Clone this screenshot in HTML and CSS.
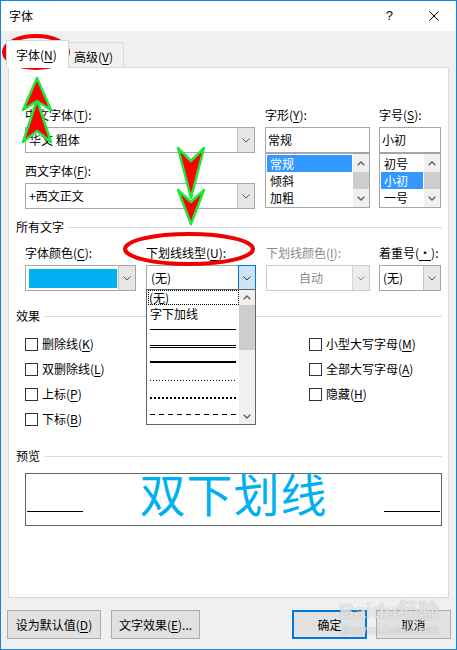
FILE: index.html
```html
<!DOCTYPE html>
<html lang="zh-CN">

<head>
    <meta charset="UTF-8">
    <title>字体</title>
    <link rel="stylesheet" href="styles.css">
</head>

<body>
    <div class="window">
        <div class="titlebar">
            <span class="title">字体</span>
            <span class="help">?</span>
            <svg class="close" width="10" height="10" viewBox="0 0 10 10">
                <path d="M0.5 0.5L9.5 9.5M9.5 0.5L0.5 9.5" stroke="#000" stroke-width="1" fill="none"/>
            </svg>
        </div>

        <div class="client">
            <div class="tabs">
                <div class="tab active">字体(<u>N</u>)</div>
                <div class="tab">高级(<u>V</u>)</div>
            </div>

            <div class="panel">
                <!-- font names / style / size -->
                <div class="font-row">
                    <div class="field col-name">
                        <label>中文字体(<u>T</u>):</label>
                        <div class="combo">
                            <span class="value">华文 粗体</span>
                            <span class="drop"><svg width="8" height="5" viewBox="0 0 8 5"><path d="M0.5 0.5L4 4L7.5 0.5" stroke="#555" fill="none"/></svg></span>
                        </div>
                        <label class="second">西文字体(<u>F</u>):</label>
                        <div class="combo">
                            <span class="value">+西文正文</span>
                            <span class="drop"><svg width="8" height="5" viewBox="0 0 8 5"><path d="M0.5 0.5L4 4L7.5 0.5" stroke="#555" fill="none"/></svg></span>
                        </div>
                    </div>

                    <div class="field col-style">
                        <label>字形(<u>Y</u>):</label>
                        <div class="editbox">常规</div>
                        <div class="listbox">
                            <div class="items">
                                <div class="item selected">常规</div>
                                <div class="item">倾斜</div>
                                <div class="item">加粗</div>
                            </div>
                            <div class="scroll">
                                <span class="arrow"><svg width="8" height="5" viewBox="0 0 8 5"><path d="M0.7 4.3L4 1L7.3 4.3" stroke="#606060" stroke-width="1.4" fill="none"/></svg></span>
                                <span class="thumb"></span>
                                <span class="arrow"><svg width="8" height="5" viewBox="0 0 8 5"><path d="M0.7 0.7L4 4L7.3 0.7" stroke="#606060" stroke-width="1.4" fill="none"/></svg></span>
                            </div>
                        </div>
                    </div>

                    <div class="field col-size">
                        <label>字号(<u>S</u>):</label>
                        <div class="editbox">小初</div>
                        <div class="listbox">
                            <div class="items">
                                <div class="item">初号</div>
                                <div class="item selected">小初</div>
                                <div class="item">一号</div>
                            </div>
                            <div class="scroll">
                                <span class="arrow"><svg width="8" height="5" viewBox="0 0 8 5"><path d="M0.7 4.3L4 1L7.3 4.3" stroke="#606060" stroke-width="1.4" fill="none"/></svg></span>
                                <span class="thumb"></span>
                                <span class="arrow"><svg width="8" height="5" viewBox="0 0 8 5"><path d="M0.7 0.7L4 4L7.3 0.7" stroke="#606060" stroke-width="1.4" fill="none"/></svg></span>
                            </div>
                        </div>
                    </div>
                </div>

                <div class="group-title first"><span>所有文字</span></div>

                <div class="attr-row">
                    <div class="field col-color">
                        <label>字体颜色(<u>C</u>):</label>
                        <div class="combo">
                            <span class="swatch"></span>
                            <span class="drop"><svg width="8" height="5" viewBox="0 0 8 5"><path d="M0.5 0.5L4 4L7.5 0.5" stroke="#555" fill="none"/></svg></span>
                        </div>
                    </div>
                    <div class="field col-uline">
                        <label>下划线线型(<u>U</u>):</label>
                        <div class="combo">
                            <span class="value">(无)</span>
                            <span class="drop hot"><svg width="8" height="5" viewBox="0 0 8 5"><path d="M0.5 0.5L4 4L7.5 0.5" stroke="#333" fill="none"/></svg></span>
                        </div>
                    </div>
                    <div class="field col-ucolor disabled">
                        <label>下划线颜色(<u>I</u>):</label>
                        <div class="combo">
                            <span class="value center">自动</span>
                            <span class="drop"><svg width="8" height="5" viewBox="0 0 8 5"><path d="M0.5 0.5L4 4L7.5 0.5" stroke="#888" fill="none"/></svg></span>
                        </div>
                    </div>
                    <div class="field col-emph">
                        <label>着重号(<u>·</u>):</label>
                        <div class="combo">
                            <span class="value">(无)</span>
                            <span class="drop"><svg width="8" height="5" viewBox="0 0 8 5"><path d="M0.5 0.5L4 4L7.5 0.5" stroke="#555" fill="none"/></svg></span>
                        </div>
                    </div>
                </div>

                <div class="group-title"><span>效果</span></div>

                <div class="effects">
                    <div class="col left">
                        <div class="check"><span class="box"></span>删除线(<u>K</u>)</div>
                        <div class="check"><span class="box"></span>双删除线(<u>L</u>)</div>
                        <div class="check"><span class="box"></span>上标(<u>P</u>)</div>
                        <div class="check"><span class="box"></span>下标(<u>B</u>)</div>
                    </div>
                    <div class="col">
                        <div class="check"><span class="box"></span>小型大写字母(<u>M</u>)</div>
                        <div class="check"><span class="box"></span>全部大写字母(<u>A</u>)</div>
                        <div class="check"><span class="box"></span>隐藏(<u>H</u>)</div>
                    </div>
                </div>

                <div class="group-title preview-title"><span>预览</span></div>

                <div class="preview">
                    <span class="rule"></span>
                    <span class="sample">双下划线</span>
                    <span class="rule"></span>
                </div>

                <!-- open underline style list -->
                <div class="droplist">
                    <div class="items">
                        <div class="item focus">(无)</div>
                        <div class="item">字下加线</div>
                        <div class="item line"><span class="single"></span></div>
                        <div class="item line"><span class="double"></span></div>
                        <div class="item line"><span class="thick"></span></div>
                        <div class="item line"><span class="dotted"></span></div>
                        <div class="item line"><span class="dotted-heavy"></span></div>
                        <div class="item line"><span class="dashed"></span></div>
                    </div>
                    <div class="scroll">
                        <span class="arrow"><svg width="8" height="5" viewBox="0 0 8 5"><path d="M0.7 4.3L4 1L7.3 4.3" stroke="#606060" stroke-width="1.4" fill="none"/></svg></span>
                        <span class="thumb"></span>
                        <span class="track"></span>
                        <span class="arrow"><svg width="8" height="5" viewBox="0 0 8 5"><path d="M0.7 0.7L4 4L7.3 0.7" stroke="#606060" stroke-width="1.4" fill="none"/></svg></span>
                    </div>
                </div>
            </div>

            <div class="buttons">
                <div class="btn btn-default-value">设为默认值(<u>D</u>)</div>
                <div class="btn btn-effects">文字效果(<u>E</u>)...</div>
                <div class="spacer"></div>
                <div class="btn btn-ok">确定</div>
                <div class="btn btn-cancel">取消</div>
            </div>
        </div>

        <div class="watermark">
            <span class="wm-logo">Bai<span class="wm-du">du</span>经验</span>
            <span class="wm-url">jingyan.baidu.com</span>
        </div>

        <!-- hand drawn marks over the dialog -->
        <svg class="marks" width="457" height="650" viewBox="0 0 457 650">
            <ellipse cx="36" cy="52" rx="32" ry="16" fill="none" stroke="#f00000" stroke-width="4"/>
            <ellipse cx="189" cy="249" rx="64" ry="15" fill="none" stroke="#f00000" stroke-width="4"/>
            <g fill="#ff0000" stroke="#1ee83a" stroke-width="2.5" stroke-linejoin="round">
                <polygon points="37,100 51,142 37,131 23,142"/>
                <polygon points="37,78 51,110 37,101 23,110"/>
                <polygon points="178,148 191,161 204,148 191,198"/>
                <polygon points="178,190 191,202 204,190 191,224"/>
            </g>
        </svg>
    </div>
</body>

</html>
```

FILE: styles.css
```css
/* General */
* {
    box-sizing: border-box;
}

body {
    margin: 0;
    font-family: "Noto Sans CJK SC", "Microsoft YaHei", sans-serif;
    font-size: 12px;
    color: #000;
    background-color: #fff;
}

u {
    text-underline-offset: 2px;
}

.window {
    position: relative;
    width: 457px;
    height: 650px;
    border: 1px solid #1883d7;
    background-color: #f0f0f0;
    overflow: hidden;
}

/* Title bar */
.titlebar {
    height: 30px;
    background-color: #fff;
    display: flex;
    align-items: center;
    padding: 0 17px 0 8px;
    line-height: 16px;
}

.titlebar .title {
    flex: 1;
}

.titlebar .help {
    font-family: "Liberation Sans", Arial, sans-serif;
    font-size: 13px;
}

.titlebar .close {
    margin-left: 36px;
}

/* Client area */
.client {
    padding: 9px 7px 0;
}

.tabs {
    display: flex;
    align-items: flex-end;
    height: 27px;
}

.tab {
    height: 25px;
    width: 55px;
    border: 1px solid #d9d9d9;
    border-left: none;
    border-bottom: none;
    padding: 6px 0 0 5px;
    line-height: 16px;
    background-color: #f0f0f0;
}

.tab.active {
    width: 63px;
    height: 28px;
    margin-left: -2px;
    margin-bottom: -1px;
    border-left: 1px solid #d9d9d9;
    padding-left: 9px;
    background-color: #fff;
    position: relative;
    z-index: 1;
}

.panel {
    position: relative;
    height: 531px;
    border: 1px solid #d9d9d9;
    background-color: #fff;
    padding: 39px 6px 0 7px;
}

.field label {
    display: block;
    line-height: 16px;
    white-space: nowrap;
}

.field label.second {
    margin-top: 10px;
}

/* Combo boxes */
.combo {
    display: flex;
    height: 26px;
    margin-top: 4px;
    border: 1px solid #a6a6a6;
    background-color: #fff;
}

.combo .value {
    flex: 1;
    padding-left: 3px;
    line-height: 24px;
    white-space: nowrap;
    overflow: hidden;
}

.combo .value.center {
    text-align: center;
}

.combo .drop {
    width: 17px;
    border-left: 1px solid #c4c4c4;
    background-color: #e6e6e6;
    display: flex;
    align-items: center;
    justify-content: center;
}

.combo .drop.hot {
    background-color: #cce4f7;
    border: 1px solid #0078d7;
    margin: -1px -1px -1px 0;
    width: 18px;
}

.combo .swatch {
    flex: 1;
    margin: 3px 1px 2px 3px;
    background-color: #00b0f0;
}

.disabled label,
.disabled .value {
    color: #8a8a8a;
}

.disabled .combo {
    border-color: #cccccc;
}

.disabled .combo .drop {
    background-color: #ececec;
    border-left-color: #d6d6d6;
}

/* Row of font selectors */
.font-row {
    display: flex;
    padding-left: 9px;
}

.col-name {
    width: 230px;
}

.col-style {
    width: 105px;
    margin-left: 10px;
}

.col-size {
    width: 62px;
    margin-left: 9px;
}

.editbox {
    height: 26px;
    margin-top: 4px;
    border: 1px solid #a6a6a6;
    padding-left: 2px;
    line-height: 24px;
}

.listbox {
    display: flex;
    height: 55px;
    border: 1px solid #a6a6a6;
    overflow: hidden;
}

.listbox .items,
.droplist .items {
    flex: 1;
    padding: 1px;
    overflow: hidden;
}

.item {
    height: 17px;
    line-height: 17px;
    padding-left: 3px;
    white-space: nowrap;
}

.item.selected {
    background-color: #3399ff;
    color: #fff;
}

.scroll {
    width: 16px;
    background-color: #f0f0f0;
    display: flex;
    flex-direction: column;
}

.scroll .arrow {
    height: 18px;
    display: flex;
    align-items: center;
    justify-content: center;
}

.scroll .thumb {
    flex: 1;
    background-color: #cdcdcd;
}

/* Section titles */
.group-title {
    display: flex;
    align-items: center;
    line-height: 16px;
    margin-top: 17px;
}

.group-title.first {
    margin-top: 10px;
}

.group-title.preview-title {
    margin-top: 21px;
}

.group-title::after {
    content: "";
    flex: 1;
    height: 1px;
    background-color: #dcdcdc;
    margin-left: 5px;
}

/* Row of colour / underline selectors */
.attr-row {
    display: flex;
    margin-top: 10px;
    padding-left: 9px;
}

.col-color {
    width: 111px;
}

.col-uline {
    width: 110px;
    margin-left: 10px;
}

.col-uline .value {
    padding-left: 4px;
}

.col-ucolor {
    width: 104px;
    margin-left: 10px;
}

.col-emph {
    width: 62px;
    margin-left: 9px;
}

.col-emph .value {
    padding-left: 3px;
}

/* Effects */
.effects {
    display: flex;
    margin-top: 12px;
    padding-left: 9px;
}

.effects .col {
    display: flex;
    flex-direction: column;
    gap: 9px;
}

.effects .col.left {
    width: 284px;
}

.check {
    display: flex;
    align-items: center;
    line-height: 16px;
    white-space: nowrap;
}

.check .box {
    width: 13px;
    height: 13px;
    border: 1px solid #333;
    background-color: #fff;
    margin-right: 4px;
}

/* Preview */
.preview {
    display: flex;
    justify-content: space-between;
    align-items: center;
    width: 417px;
    height: 53px;
    margin: 9px 0 0 9px;
    border: 1px solid #646464;
}

.preview .rule {
    width: 56px;
    height: 1px;
    background-color: #000;
    margin: 0 1px;
    align-self: flex-end;
    margin-bottom: 13px;
}

.preview .sample {
    font-size: 46px;
    line-height: 40px;
    height: 40px;
    color: #00b0f0;
    margin-bottom: 16px;
    letter-spacing: 1px;
}

/* Open underline list */
.droplist {
    position: absolute;
    left: 137px;
    top: 221px;
    width: 110px;
    height: 136px;
    border: 1px solid #646464;
    background-color: #fff;
    display: flex;
    z-index: 2;
}

.droplist .items {
    padding: 0 0 0 1px;
}

.droplist .item {
    padding-left: 2px;
}

.droplist .item.focus {
    height: 15px;
    line-height: 15px;
    outline: 1px dotted #000;
    outline-offset: -1px;
    padding-left: 1px;
}

.droplist .item.line {
    padding-top: 7px;
}

.droplist .item.line span {
    display: block;
    width: 86px;
}

.single {
    height: 1px;
    background-color: #000;
}

.double {
    margin-top: -1px;
    height: 3px;
    border-top: 1px solid #000;
    border-bottom: 1px solid #000;
}

.thick {
    margin-top: -2px;
    height: 2px;
    background-color: #000;
}

.dotted {
    height: 1px;
    background: repeating-linear-gradient(90deg, #000 0 1px, transparent 1px 3px);
}

.dotted-heavy {
    height: 2px;
    background: repeating-linear-gradient(90deg, #000 0 2px, transparent 2px 4px);
}

.dashed {
    height: 1px;
    background: repeating-linear-gradient(90deg, #000 0 5px, transparent 5px 9px);
}

.droplist .scroll .arrow {
    height: 15px;
}

.droplist .scroll .thumb {
    flex: none;
    height: 45px;
}

.droplist .scroll .track {
    flex: 1;
}

/* Buttons */
.buttons {
    display: flex;
    margin: 12px -2px 0 -1px;
}

.btn {
    height: 29px;
    border: 1px solid #adadad;
    background-color: #e1e1e1;
    line-height: 27px;
    text-align: center;
    white-space: nowrap;
}

.btn-default-value {
    width: 94px;
}

.btn-effects {
    width: 89px;
    margin-left: 10px;
}

.spacer {
    flex: 1;
}

.btn-ok {
    width: 75px;
    border: 2px solid #0078d7;
    line-height: 25px;
}

.btn-cancel {
    width: 75px;
    margin-left: 9px;
}

/* Watermark and annotations */
.watermark {
    position: absolute;
    left: 338px;
    top: 598px;
    display: flex;
    flex-direction: column;
    color: rgba(255, 255, 255, 0.7);
    text-shadow: 0 0 1px rgba(110, 110, 110, 0.6);
    pointer-events: none;
}

.wm-logo {
    font-family: "Liberation Sans", Arial, sans-serif;
    font-weight: bold;
    font-size: 21px;
    line-height: 24px;
}

.wm-url {
    font-family: "Liberation Sans", Arial, sans-serif;
    font-size: 12px;
    line-height: 14px;
    margin-left: 3px;
}

.marks {
    position: absolute;
    left: -1px;
    top: -1px;
    pointer-events: none;
}
```
